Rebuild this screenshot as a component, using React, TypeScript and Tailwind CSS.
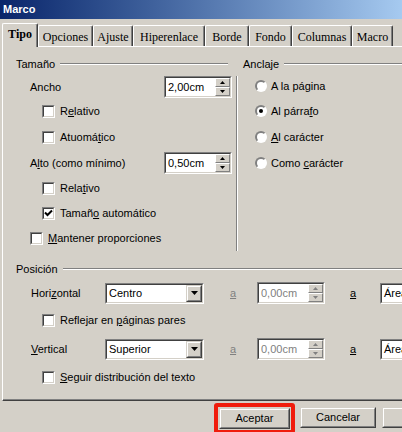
import React from "react";

// helpers for the classic 3D look
const sunkenOuter = "border border-t-[#808080] border-l-[#808080] border-r-white border-b-white";
const sunkenInner = "border border-t-[#404040] border-l-[#404040] border-r-[#d4d0c8] border-b-[#d4d0c8]";
const raisedOuter = "border border-t-[#d4d0c8] border-l-[#d4d0c8] border-r-[#404040] border-b-[#404040]";
const raisedInner = "border border-t-white border-l-white border-r-[#808080] border-b-[#808080]";

const tabs = [
  { label: "Tipo", w: "w-[36px]" },
  { label: "Opciones", w: "w-[55px]" },
  { label: "Ajuste", w: "w-[40px]" },
  { label: "Hiperenlace", w: "w-[72px]" },
  { label: "Borde", w: "w-[44px]" },
  { label: "Fondo", w: "w-[43px]" },
  { label: "Columnas", w: "w-[60px]" },
  { label: "Macro", w: "w-[41px]" },
];

function Legend({ text, className }: { text: string; className?: string }) {
  return (
    <div className={`flex items-center h-[14px] ${className ?? ""}`}>
      <span className="pr-[5px]">{text}</span>
      <div className="flex-1 border-t border-t-[#808080] border-b border-b-white" />
    </div>
  );
}

function Check({ checked }: { checked?: boolean }) {
  return (
    <div className={`w-[13px] h-[13px] shrink-0 ${sunkenOuter}`}>
      <div className={`w-full h-full bg-white ${sunkenInner}`}>
        {checked && (
          <svg width="9" height="9" viewBox="0 0 9 9" className="block">
            <polyline points="1,3.5 3.5,6 8,1.5" fill="none" stroke="black" strokeWidth="2" />
          </svg>
        )}
      </div>
    </div>
  );
}

function Radio({ checked }: { checked?: boolean }) {
  return (
    <div className="w-[12px] h-[12px] shrink-0 rounded-full border-2 border-t-[#808080] border-l-[#808080] border-r-white border-b-white bg-white flex items-center justify-center">
      {checked && <div className="w-[4px] h-[4px] rounded-full bg-black" />}
    </div>
  );
}

function SpinHalf({ up, disabled }: { up?: boolean; disabled?: boolean }) {
  const c = disabled ? "#808080" : "#000";
  return (
    <div className={`flex-1 bg-[#d4d0c8] ${raisedInner} flex items-center justify-center`}>
      <svg width="5" height="3" viewBox="0 0 5 3">
        {up ? <polygon points="2.5,0 5,3 0,3" fill={c} /> : <polygon points="0,0 5,0 2.5,3" fill={c} />}
      </svg>
    </div>
  );
}

function SpinField({ value, disabled }: { value: string; disabled?: boolean }) {
  return (
    <div className={`w-[68px] h-[22px] shrink-0 ${sunkenOuter}`}>
      <div className={`h-full bg-white flex ${sunkenInner}`}>
        <span className={`flex-1 pl-[2px] leading-[18px] ${disabled ? "text-[#808080]" : "text-black"}`}>{value}</span>
        <div className="w-[15px] flex flex-col">
          <SpinHalf up disabled={disabled} />
          <SpinHalf disabled={disabled} />
        </div>
      </div>
    </div>
  );
}

function Dropdown({ value, w }: { value: string; w: string }) {
  return (
    <div className={`${w} h-[21px] shrink-0 ${sunkenOuter}`}>
      <div className={`h-full bg-white flex ${sunkenInner}`}>
        <span className="flex-1 pl-[2px] leading-[17px] whitespace-nowrap overflow-hidden">{value}</span>
        <div className={`w-[16px] bg-[#d4d0c8] ${raisedOuter}`}>
          <div className={`h-full ${raisedInner} flex items-center justify-center`}>
            <svg width="7" height="4" viewBox="0 0 7 4">
              <polygon points="0,0 7,0 3.5,4" fill="black" />
            </svg>
          </div>
        </div>
      </div>
    </div>
  );
}

function Button({ children, w }: { children?: React.ReactNode; w: string }) {
  return (
    <div className={`${w} h-[21px] shrink-0 ${raisedOuter}`}>
      <div className={`h-full ${raisedInner} flex items-center justify-center`}>{children}</div>
    </div>
  );
}

export default function App() {
  return (
    <div
      className="w-[402px] h-[432px] overflow-hidden bg-[#d4d0c8] text-[11px] text-black"
      style={{ fontFamily: '"Liberation Sans", Arial, sans-serif' }}
    >
      {/* title bar */}
      <div className="h-[19px] flex items-center pl-[3px] bg-gradient-to-r from-[#0a246a] to-[#a6caf0]">
        <span className="text-white font-bold text-[11px]">Marco</span>
      </div>

      {/* tabs */}
      <div
        className="flex items-end h-[27px] pl-[2px] pt-[3px]"
        style={{ fontFamily: '"Liberation Serif", "Times New Roman", serif' }}
      >
        {tabs.map((t, i) =>
          i === 0 ? (
            <div
              key={t.label}
              className={`${t.w} shrink-0 h-[24px] -mb-px relative z-10 bg-[#d4d0c8] border-t border-l border-white border-r border-r-[#404040] shadow-[inset_-1px_0_0_#808080] rounded-t-[2px] flex items-center justify-center pb-[3px] font-bold text-[12px]`}
            >
              {t.label}
            </div>
          ) : (
            <div
              key={t.label}
              className={`${t.w} shrink-0 h-[21px] border-t border-l border-white border-r border-r-[#404040] shadow-[inset_-1px_0_0_#808080] rounded-t-[2px] flex items-center justify-center pt-px text-[12px]`}
            >
              {t.label}
            </div>
          )
        )}
      </div>

      {/* panel */}
      <div className="ml-[2px] w-[420px] h-[355px] border-t border-l border-white border-b border-b-[#404040] shadow-[inset_0_-1px_0_#808080] flex flex-col">
        <div className="flex h-[204px]">
          {/* Tamaño */}
          <div className="w-[233px] shrink-0 flex flex-col">
            <Legend text="Tamaño" className="mt-[10px] pl-[13px] pr-[8px]" />
            <div className="mt-[4px] h-[24px] flex items-center pl-[27px] pr-[4px]">
              <span className="flex-1">Ancho</span>
              <SpinField value="2,00cm" />
            </div>
            <div className="h-[25px] flex items-center pl-[39px] gap-[5px]">
              <Check />
              <span>R<u>e</u>lativo</span>
            </div>
            <div className="h-[27px] flex items-center pl-[39px] gap-[5px]">
              <Check />
              <span>Atuomá<u>t</u>ico</span>
            </div>
            <div className="h-[24px] flex items-center pl-[27px] pr-[4px]">
              <span className="flex-1">A<u>l</u>to (como mínimo)</span>
              <SpinField value="0,50cm" />
            </div>
            <div className="h-[26px] flex items-center pl-[39px] gap-[5px]">
              <Check />
              <span>Rela<u>t</u>ivo</span>
            </div>
            <div className="h-[24px] flex items-center pl-[39px] gap-[5px]">
              <Check checked />
              <span>Tamañ<u>o</u> automático</span>
            </div>
            <div className="h-[26px] flex items-center pl-[27px] gap-[5px]">
              <Check />
              <span><u>M</u>antener proporciones</span>
            </div>
          </div>

          {/* Anclaje */}
          <div className="flex-1 flex flex-col">
            <Legend text="Anclaje" className="mt-[10px] pl-[7px]" />
            <div className="mt-[5px] h-[175px] border-l border-l-[#808080] shadow-[inset_1px_0_0_white] pl-[18px] flex flex-col">
              <div className="h-[20px] flex items-center gap-[4px]">
                <Radio />
                <span>A la pá<u>g</u>ina</span>
              </div>
              <div className="mt-[5px] h-[20px] flex items-center gap-[4px]">
                <Radio checked />
                <span>Al párra<u>f</u>o</span>
              </div>
              <div className="mt-[6px] h-[20px] flex items-center gap-[4px]">
                <Radio />
                <span><u>A</u>l carácter</span>
              </div>
              <div className="mt-[6px] h-[20px] flex items-center gap-[4px]">
                <Radio />
                <span>Como <u>c</u>arácter</span>
              </div>
            </div>
          </div>
        </div>

        {/* Posición */}
        <Legend text="Posición" className="mt-[11px] pl-[13px]" />
        <div className="mt-[7px] h-[20px] flex items-center pl-[28px]">
          <span className="w-[74px] shrink-0">Hori<u>z</u>ontal</span>
          <Dropdown value="Centro" w="w-[99px]" />
          <span className="ml-[26px] w-[27px] shrink-0 text-[#808080]"><u>a</u></span>
          <SpinField value="0,00cm" disabled />
          <span className="ml-[25px] w-[30px] shrink-0"><u>a</u></span>
          <Dropdown value="Área de párrafo" w="w-[100px]" />
        </div>
        <div className="mt-[7px] h-[20px] flex items-center pl-[39px] gap-[5px]">
          <Check />
          <span>Reflejar en <u>p</u>áginas pares</span>
        </div>
        <div className="mt-[9px] h-[20px] flex items-center pl-[28px]">
          <span className="w-[74px] shrink-0"><u>V</u>ertical</span>
          <Dropdown value="Superior" w="w-[99px]" />
          <span className="ml-[26px] w-[27px] shrink-0 text-[#808080]"><u>a</u></span>
          <SpinField value="0,00cm" disabled />
          <span className="ml-[25px] w-[30px] shrink-0"><u>a</u></span>
          <Dropdown value="Área de párrafo" w="w-[100px]" />
        </div>
        <div className="mt-[8px] h-[20px] flex items-center pl-[39px] gap-[5px]">
          <Check />
          <span><u>S</u>eguir distribución del texto</span>
        </div>
      </div>

      {/* footer buttons */}
      <div className="flex items-start pl-[214px] mt-[2px]">
        <div className="shrink-0 border-4 border-[#f01c0c] rounded-[3px] p-px">
          <Button w="w-[71px]">Aceptar</Button>
        </div>
        <div className="shrink-0 mt-[4px] ml-[5px]">
          <Button w="w-[76px]">Cancelar</Button>
        </div>
        <div className="shrink-0 mt-[4px] ml-[6px]">
          <Button w="w-[76px]" />
        </div>
      </div>
    </div>
  );
}
